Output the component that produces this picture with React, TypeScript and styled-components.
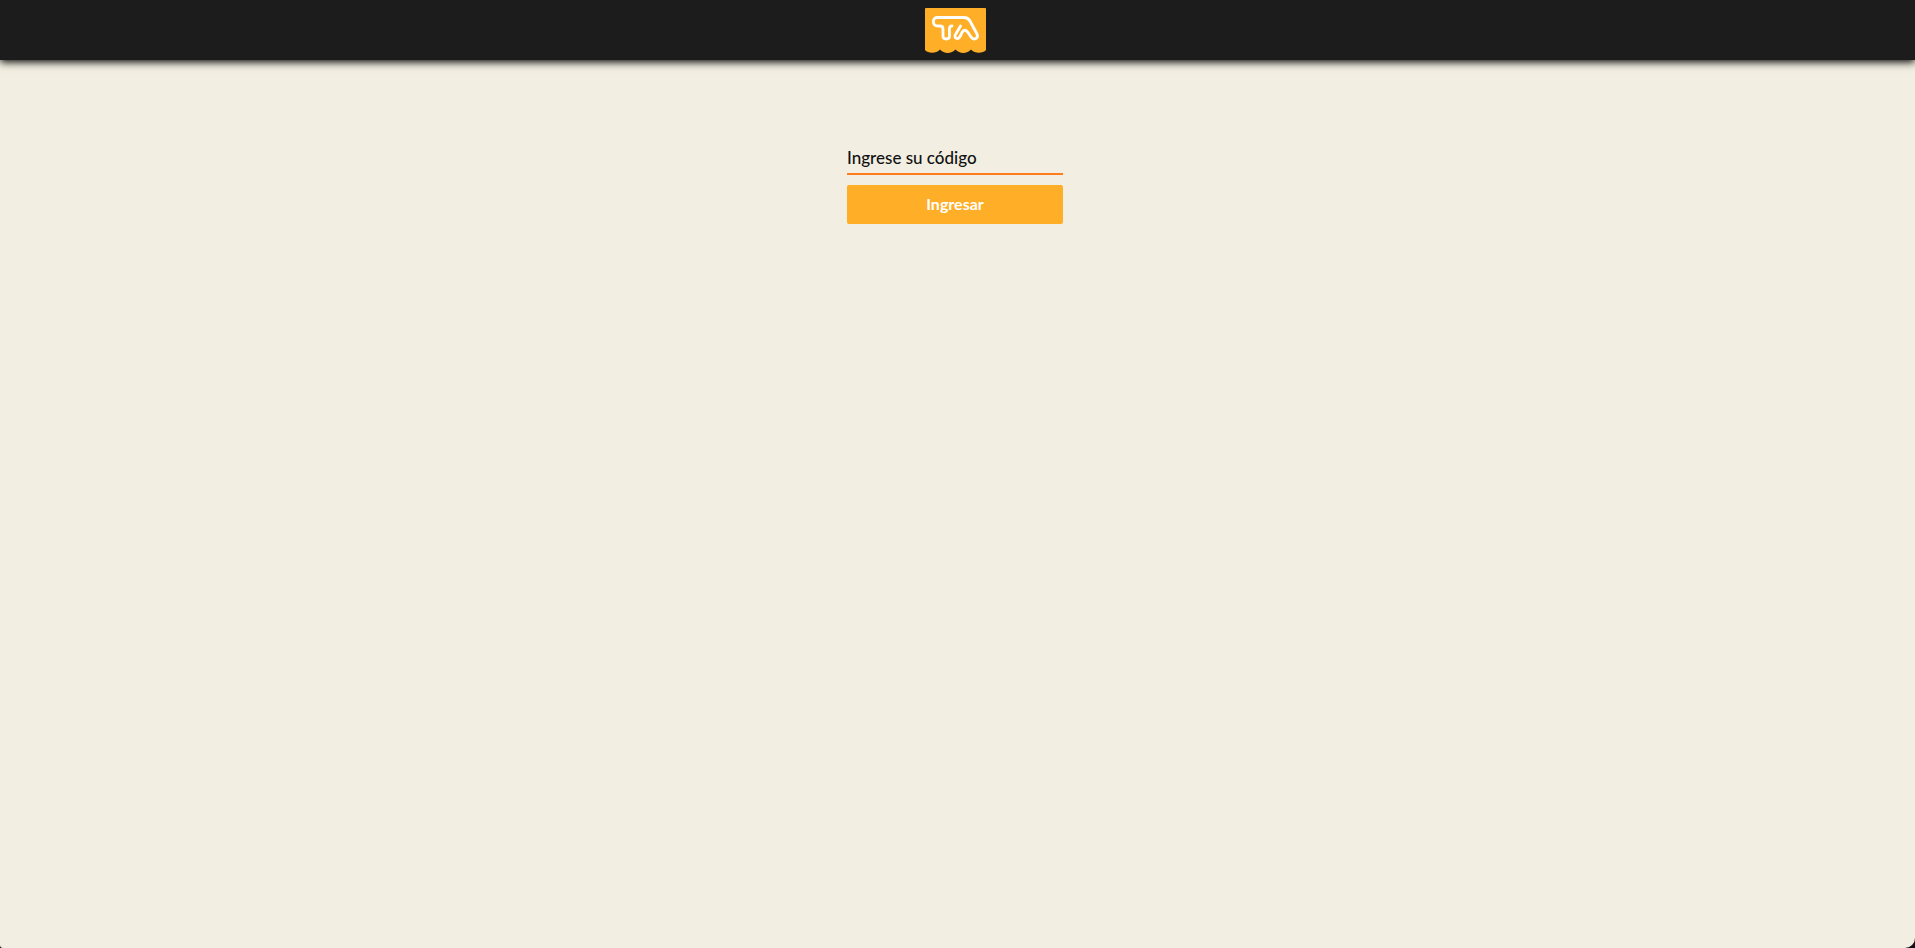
import React from "react";
import styled, { createGlobalStyle } from "styled-components";

const GlobalStyle = createGlobalStyle`
  * { box-sizing: border-box; }
  html { background: #14101a; }
  body { margin: 0; font-family: Lato, "Open Sans", sans-serif; color: #111; }
`;

const Page = styled.div`
  min-height: 100vh;
  display: flex;
  flex-direction: column;
  background: #f2eee1;
  border-radius: 0 0 10px 3px;
`;

const Header = styled.header`
  display: flex;
  justify-content: center;
  align-items: center;
  height: 60px;
  padding-right: 4px;
  background: #1c1c1c;
  box-shadow: 0 2px 8px #000;
`;

const Logo = styled.svg`
  display: block;
  width: 61px;
  height: 45px;
`;

const Main = styled.main`
  display: flex;
  justify-content: center;
  padding: 84px 5px 0 0;
`;

const Form = styled.form`
  display: flex;
  flex-direction: column;
  gap: 10px;
  width: 216px;
`;

const CodeInput = styled.input`
  width: 100%;
  height: 31px;
  padding: 0 0 2px;
  border: 0;
  border-bottom: 2px solid #ff7b1c;
  border-radius: 0;
  outline: 0;
  background: transparent;
  color: #111;
  font: 500 17px/26px Lato, "Open Sans", sans-serif;
  &::placeholder { color: #111; opacity: 1; }
`;

const SubmitButton = styled.button`
  height: 39px;
  padding: 0 0 2px;
  border: 0;
  border-radius: 2px;
  background: #ffae27;
  color: #fff;
  font: 700 16px/24px Lato, "Open Sans", sans-serif;
  cursor: pointer;
`;

export default function App() {
  return (
    <>
      <GlobalStyle />
      <Page>
        <Header>
          <Logo viewBox="0 0 61 45" role="img" aria-label="TA">
            <path
              fill="#ffae27"
              d="M1 0H60Q61 0 61 1V42C58 45.500 50 46 46 41.500C42 46 34.500 46 30.500 41.500C26.500 46 19 46 15 41.500C11 46 3 45.500 0 42V1Q0 0 1 0Z"
            />
            <path
              fill="none"
              stroke="#fff"
              strokeWidth="2.800"
              strokeLinecap="round"
              strokeLinejoin="round"
              d="M27 18C23.500 18 24.500 21 24.500 28C24.500 32 18 32 18 28V21C18 19 17 18 15 18H13C7 18 7 9.500 12 9.500H39C42 9.500 43.500 10.500 45 13L52 26C54 30 49 33 46 29L43 24.500C41 21.500 38.500 21.500 37 24.500L35 28.500C33 32.500 28.500 30 30.500 26.500L35.500 18"
            />
          </Logo>
        </Header>
        <Main>
          <Form onSubmit={(e: React.FormEvent) => e.preventDefault()}>
            <CodeInput type="text" placeholder="Ingrese su código" aria-label="Ingrese su código" />
            <SubmitButton type="submit">Ingresar</SubmitButton>
          </Form>
        </Main>
      </Page>
    </>
  );
}
